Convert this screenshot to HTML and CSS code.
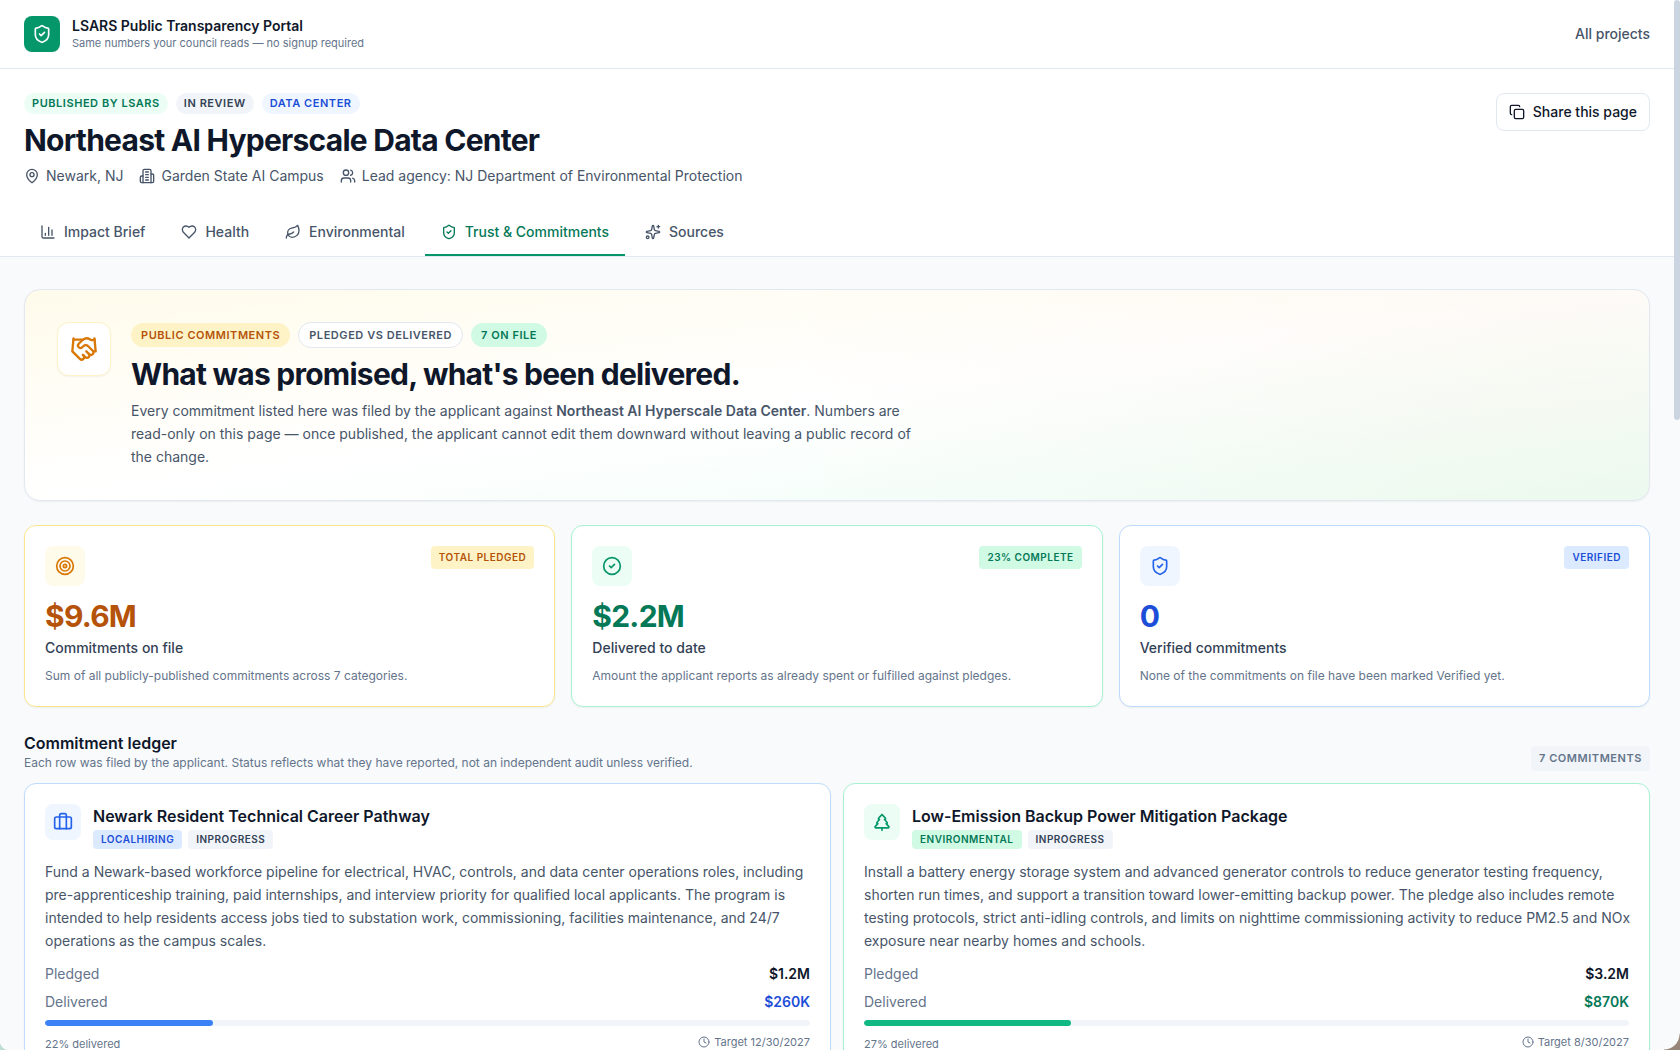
FILE: index.html
```html
<!DOCTYPE html>
<html lang="en">
<head>
  <meta charset="UTF-8" />
  <title>Northeast AI Hyperscale Data Center – LSARS Public Transparency Portal</title>
  <meta name="viewport" content="width=device-width, initial-scale=1.0" />
  <link rel="stylesheet" href="styles.css">
</head>
<body>

  <!-- Shared icons -->
  <svg class="sprite" aria-hidden="true">
    <symbol id="shield" viewBox="0 0 24 24">
      <path d="M20 13c0 5-3.5 7.5-7.66 8.95a1 1 0 0 1-.67-.01C7.5 20.5 4 18 4 13V6a1 1 0 0 1 1-1c2 0 4.5-1.2 6.24-2.72a1.17 1.17 0 0 1 1.52 0C14.51 3.81 17 5 19 5a1 1 0 0 1 1 1z" />
      <path d="m9 12 2 2 4-4" />
    </symbol>
    <symbol id="clock" viewBox="0 0 24 24">
      <circle cx="12" cy="12" r="10" />
      <path d="M12 6v6l4 2" />
    </symbol>
  </svg>

  <header class="topbar">
    <div class="brand">
      <div class="brand-logo"><svg class="icon icon-md"><use href="#shield" /></svg></div>
      <div>
        <div class="brand-name">LSARS Public Transparency Portal</div>
        <div class="brand-tagline">Same numbers your council reads — no signup required</div>
      </div>
    </div>
    <a class="topbar-link" href="#">All projects</a>
  </header>

  <section class="project">
    <div class="project-head">
      <div>
        <div class="pills">
          <span class="pill green">Published by LSARS</span>
          <span class="pill gray">In review</span>
          <span class="pill blue">Data center</span>
        </div>
        <h1>Northeast AI Hyperscale Data Center</h1>
        <div class="meta">
          <span class="meta-item">
            <svg class="icon" viewBox="0 0 24 24"><path d="M20 10c0 4.993-5.539 10.193-7.399 11.799a1 1 0 0 1-1.202 0C9.539 20.193 4 14.993 4 10a8 8 0 0 1 16 0" /><circle cx="12" cy="10" r="3" /></svg>
            Newark, NJ
          </span>
          <span class="meta-item">
            <svg class="icon" viewBox="0 0 24 24"><path d="M6 22V4a2 2 0 0 1 2-2h8a2 2 0 0 1 2 2v18Z" /><path d="M6 12H4a2 2 0 0 0-2 2v6a2 2 0 0 0 2 2h2" /><path d="M18 9h2a2 2 0 0 1 2 2v9a2 2 0 0 1-2 2h-2" /><path d="M10 6h4M10 10h4M10 14h4M10 18h4" /></svg>
            Garden State AI Campus
          </span>
          <span class="meta-item">
            <svg class="icon" viewBox="0 0 24 24"><path d="M16 21v-2a4 4 0 0 0-4-4H6a4 4 0 0 0-4 4v2" /><circle cx="9" cy="7" r="4" /><path d="M22 21v-2a4 4 0 0 0-3-3.87" /><path d="M16 3.13a4 4 0 0 1 0 7.75" /></svg>
            Lead agency: NJ Department of Environmental Protection
          </span>
        </div>
      </div>
      <button class="share" type="button">
        <svg class="icon" viewBox="0 0 24 24"><rect width="14" height="14" x="8" y="8" rx="2" /><path d="M4 16c-1.1 0-2-.9-2-2V4c0-1.1.9-2 2-2h10c1.1 0 2 .9 2 2" /></svg>
        Share this page
      </button>
    </div>

    <nav class="tabs">
      <a class="tab" href="#">
        <svg class="icon" viewBox="0 0 24 24"><path d="M3 3v16a2 2 0 0 0 2 2h16" /><path d="M18 17V9M13 17V5M8 17v-3" /></svg>
        Impact Brief
      </a>
      <a class="tab" href="#">
        <svg class="icon" viewBox="0 0 24 24"><path d="M19 14c1.49-1.46 3-3.21 3-5.5A5.5 5.5 0 0 0 16.5 3c-1.76 0-3 .5-4.5 2-1.5-1.5-2.74-2-4.5-2A5.5 5.5 0 0 0 2 8.5c0 2.3 1.5 4.05 3 5.5l7 7Z" /></svg>
        Health
      </a>
      <a class="tab" href="#">
        <svg class="icon" viewBox="0 0 24 24"><path d="M11 20A7 7 0 0 1 9.8 6.1C15.5 5 17 4.48 19 2c1 2 2 4.18 2 8 0 5.5-4.78 10-10 10Z" /><path d="M2 21c0-3 1.85-5.36 5.08-6C9.5 14.52 12 13 13 12" /></svg>
        Environmental
      </a>
      <a class="tab active" href="#" aria-current="page">
        <svg class="icon"><use href="#shield" /></svg>
        Trust &amp; Commitments
      </a>
      <a class="tab" href="#">
        <svg class="icon" viewBox="0 0 24 24"><path d="M11.017 2.814a1 1 0 0 1 1.966 0l1.051 5.558a2 2 0 0 0 1.594 1.594l5.558 1.051a1 1 0 0 1 0 1.966l-5.558 1.051a2 2 0 0 0-1.594 1.594l-1.051 5.558a1 1 0 0 1-1.966 0l-1.051-5.558a2 2 0 0 0-1.594-1.594l-5.558-1.051a1 1 0 0 1 0-1.966l5.558-1.051a2 2 0 0 0 1.594-1.594z" /><path d="M20 2v4M22 4h-4" /><circle cx="4" cy="20" r="2" /></svg>
        Sources
      </a>
    </nav>
  </section>

  <main>
    <section class="hero">
      <div class="hero-icon">
        <svg class="icon icon-lg" viewBox="0 0 24 24"><path d="m11 17 2 2a1 1 0 1 0 3-3" /><path d="m14 14 2.5 2.5a1 1 0 1 0 3-3l-3.88-3.88a3 3 0 0 0-4.24 0l-.88.88a1 1 0 1 1-3-3l2.81-2.81a5.79 5.79 0 0 1 7.06-.87l.47.28a2 2 0 0 0 1.42.25L21 4" /><path d="m21 3 1 11h-2" /><path d="M3 3 2 14l6.5 6.5a1 1 0 1 0 3-3" /><path d="M3 4h8" /></svg>
      </div>
      <div class="hero-body">
        <div class="pills">
          <span class="pill large amber">Public commitments</span>
          <span class="pill large outline">Pledged vs delivered</span>
          <span class="pill large mint">7 on file</span>
        </div>
        <h2>What was promised, what's been delivered.</h2>
        <p>Every commitment listed here was filed by the applicant against <strong>Northeast AI Hyperscale Data Center</strong>. Numbers are read-only on this page — once published, the applicant cannot edit them downward without leaving a public record of the change.</p>
      </div>
    </section>

    <section class="stats">
      <article class="card stat stat-amber">
        <div class="stat-top">
          <div class="tile"><svg class="icon icon-md" viewBox="0 0 24 24"><circle cx="12" cy="12" r="10" /><circle cx="12" cy="12" r="6" /><circle cx="12" cy="12" r="2" /></svg></div>
          <span class="tag tag-tall">Total pledged</span>
        </div>
        <div class="stat-value">$9.6M</div>
        <div class="stat-label">Commitments on file</div>
        <p class="stat-note">Sum of all publicly-published commitments across 7 categories.</p>
      </article>
      <article class="card stat stat-green">
        <div class="stat-top">
          <div class="tile"><svg class="icon icon-md" viewBox="0 0 24 24"><circle cx="12" cy="12" r="10" /><path d="m9 12 2 2 4-4" /></svg></div>
          <span class="tag tag-tall">23% complete</span>
        </div>
        <div class="stat-value">$2.2M</div>
        <div class="stat-label">Delivered to date</div>
        <p class="stat-note">Amount the applicant reports as already spent or fulfilled against pledges.</p>
      </article>
      <article class="card stat stat-blue">
        <div class="stat-top">
          <div class="tile"><svg class="icon icon-md"><use href="#shield" /></svg></div>
          <span class="tag tag-tall">Verified</span>
        </div>
        <div class="stat-value">0</div>
        <div class="stat-label">Verified commitments</div>
        <p class="stat-note">None of the commitments on file have been marked Verified yet.</p>
      </article>
    </section>

    <section>
      <div class="ledger-head">
        <div>
          <h2>Commitment ledger</h2>
          <p>Each row was filed by the applicant. Status reflects what they have reported, not an independent audit unless verified.</p>
        </div>
        <span class="count">7 commitments</span>
      </div>

      <div class="ledger">
        <article class="card pledge stat-blue">
          <div class="pledge-top">
            <div class="tile"><svg class="icon icon-md" viewBox="0 0 24 24"><path d="M16 20V4a2 2 0 0 0-2-2h-4a2 2 0 0 0-2 2v16" /><rect width="20" height="14" x="2" y="6" rx="2" /></svg></div>
            <div>
              <h3>Newark Resident Technical Career Pathway</h3>
              <div class="tags">
                <span class="tag">LocalHiring</span>
                <span class="tag tag-gray">InProgress</span>
              </div>
            </div>
          </div>
          <p class="pledge-text">Fund a Newark-based workforce pipeline for electrical, HVAC, controls, and data center operations roles, including pre-apprenticeship training, paid internships, and interview priority for qualified local applicants. The program is intended to help residents access jobs tied to substation work, commissioning, facilities maintenance, and 24/7 operations as the campus scales.</p>
          <dl class="amounts">
            <div><dt>Pledged</dt><dd>$1.2M</dd></div>
            <div><dt>Delivered</dt><dd class="delivered">$260K</dd></div>
          </dl>
          <div class="bar"><div class="bar-fill" style="width: 22%"></div></div>
          <div class="pledge-foot">
            <span>22% delivered</span>
            <span class="target"><svg class="icon icon-sm"><use href="#clock" /></svg>Target 12/30/2027</span>
          </div>
        </article>

        <article class="card pledge stat-green">
          <div class="pledge-top">
            <div class="tile"><svg class="icon icon-md" viewBox="0 0 24 24"><path d="m17 14 3 3.3a1 1 0 0 1-.7 1.7H4.7a1 1 0 0 1-.7-1.7L7 14h-.3a1 1 0 0 1-.7-1.7L9 9h-.2A1 1 0 0 1 8 7.3L12 3l4 4.3a1 1 0 0 1-.8 1.7H15l3 3.3a1 1 0 0 1-.7 1.7H17Z" /><path d="M12 22v-3" /></svg></div>
            <div>
              <h3>Low-Emission Backup Power Mitigation Package</h3>
              <div class="tags">
                <span class="tag">Environmental</span>
                <span class="tag tag-gray">InProgress</span>
              </div>
            </div>
          </div>
          <p class="pledge-text">Install a battery energy storage system and advanced generator controls to reduce generator testing frequency, shorten run times, and support a transition toward lower-emitting backup power. The pledge also includes remote testing protocols, strict anti-idling controls, and limits on nighttime commissioning activity to reduce PM2.5 and NOx exposure near nearby homes and schools.</p>
          <dl class="amounts">
            <div><dt>Pledged</dt><dd>$3.2M</dd></div>
            <div><dt>Delivered</dt><dd class="delivered">$870K</dd></div>
          </dl>
          <div class="bar"><div class="bar-fill" style="width: 27%"></div></div>
          <div class="pledge-foot">
            <span>27% delivered</span>
            <span class="target"><svg class="icon icon-sm"><use href="#clock" /></svg>Target 8/30/2027</span>
          </div>
        </article>
      </div>
    </section>
  </main>

  <!-- Scroll thumb and rounded window corners -->
  <div class="scroll-thumb"></div>
  <div class="corner corner-left"></div>
  <div class="corner corner-right"></div>

</body>
</html>
```
FILE: styles.css
```css
* {
  box-sizing: border-box;
}

html {
  scrollbar-width: none;
}

body {
  margin: 0;
  font-family: Inter, "Liberation Sans", sans-serif;
  font-size: 14px;
  line-height: 20px;
  color: #0f172a;
  background: #f8fafc;
}

h1, h2, h3, p, dl, dd {
  margin: 0;
}

a {
  text-decoration: none;
}

.sprite {
  display: none;
}

.icon {
  width: 16px;
  height: 16px;
  flex-shrink: 0;
  fill: none;
  stroke: currentColor;
  stroke-width: 2;
  stroke-linecap: round;
  stroke-linejoin: round;
}

.icon-sm {
  width: 12px;
  height: 12px;
}

.icon-md {
  width: 20px;
  height: 20px;
}

.icon-lg {
  width: 28px;
  height: 28px;
}

/* Top bar */
.topbar {
  display: flex;
  align-items: center;
  justify-content: space-between;
  padding: 16px 30px 16px 24px;
  background: #fff;
  border-bottom: 1px solid #e2e8f0;
}

.brand {
  display: flex;
  align-items: center;
  gap: 12px;
}

.brand-logo {
  display: flex;
  align-items: center;
  justify-content: center;
  width: 36px;
  height: 36px;
  border-radius: 8px;
  color: #fff;
  background: #059669;
}

.brand-name {
  font-weight: 600;
  line-height: 18px;
}

.brand-tagline {
  font-size: 11px;
  line-height: 16px;
  color: #64748b;
}

.topbar-link {
  font-weight: 500;
  color: #475569;
}

/* Project header */
.project {
  padding: 24px 30px 0 24px;
  background: #fff;
  border-bottom: 1px solid #e2e8f0;
}

.project-head {
  display: flex;
  align-items: flex-start;
  justify-content: space-between;
}

.pills {
  display: flex;
  align-items: center;
  gap: 8px;
}

.pill {
  padding: 2px 8px;
  border-radius: 999px;
  font-size: 11px;
  line-height: 17px;
  font-weight: 600;
  letter-spacing: 0.05em;
  text-transform: uppercase;
}

.pill.large {
  padding: 4px 10px;
  line-height: 16px;
}

.green {
  color: #047857;
  background: #ecfdf5;
}

.gray {
  color: #334155;
  background: #f1f5f9;
}

.blue {
  color: #1d4ed8;
  background: #eff6ff;
}

.amber {
  color: #b45309;
  background: #fef3c7;
}

.mint {
  color: #047857;
  background: #d1fae5;
}

.outline {
  color: #475569;
  background: #fff;
  border: 1px solid #e2e8f0;
}

h1,
.hero h2 {
  margin: 8px 0;
  font-size: 30px;
  line-height: 36px;
  font-weight: 700;
  letter-spacing: -0.025em;
}

.meta {
  display: flex;
  gap: 16px;
  color: #475569;
}

.meta-item {
  display: flex;
  align-items: center;
  gap: 6px;
}

.share {
  display: flex;
  align-items: center;
  gap: 8px;
  padding: 8px 12px;
  border: 1px solid #e2e8f0;
  border-radius: 8px;
  font: inherit;
  font-weight: 500;
  color: #0f172a;
  background: #fff;
  cursor: pointer;
}

.tabs {
  display: flex;
  gap: 4px;
  margin-top: 24px;
}

.tab {
  display: flex;
  align-items: center;
  gap: 8px;
  padding: 12px 16px;
  border-bottom: 2px solid transparent;
  font-weight: 500;
  color: #475569;
}

.tab.active {
  color: #047857;
  border-bottom-color: #059669;
}

/* Content */
main {
  display: flex;
  flex-direction: column;
  gap: 24px;
  padding: 32px 30px 32px 24px;
}

.hero {
  display: flex;
  align-items: flex-start;
  gap: 20px;
  padding: 32px;
  border: 1px solid #e2e8f0;
  border-radius: 16px;
  background:
    radial-gradient(circle at 95% 30%, rgba(217, 119, 6, 0.035), transparent 800px),
    linear-gradient(to bottom right, #fffbeb, #fff, #ecfdf5);
  box-shadow: 0 1px 2px rgba(0, 0, 0, 0.05);
}

.hero-icon {
  display: flex;
  align-items: center;
  justify-content: center;
  flex-shrink: 0;
  width: 54px;
  height: 54px;
  border: 1px solid #fef3c7;
  border-radius: 12px;
  color: #d97706;
  background: #fff;
  box-shadow: 0 1px 2px rgba(0, 0, 0, 0.05);
}

.hero-body {
  max-width: 800px;
}

.hero h2 {
  margin-bottom: 7px;
}

.hero p,
.pledge-text {
  line-height: 23px;
  color: #475569;
}

.hero strong {
  font-weight: 600;
}

.card {
  padding: 20px;
  border: 1px solid var(--border);
  border-radius: 12px;
  background: #fff;
  box-shadow: 0 1px 2px rgba(0, 0, 0, 0.05);
}

.stat-amber {
  --border: #fde68a;
  --tile: #fffbeb;
  --icon: #d97706;
  --tag: #fef3c7;
  --text: #b45309;
}

.stat-green {
  --border: #a7f3d0;
  --tile: #ecfdf5;
  --icon: #059669;
  --tag: #d1fae5;
  --text: #047857;
  --bar: #10b981;
}

.stat-blue {
  --border: #bfdbfe;
  --tile: #eff6ff;
  --icon: #2563eb;
  --tag: #dbeafe;
  --text: #1d4ed8;
  --bar: #3b82f6;
}

.tile {
  display: flex;
  align-items: center;
  justify-content: center;
  flex-shrink: 0;
  width: 40px;
  height: 40px;
  border-radius: 8px;
  color: var(--icon);
  background: var(--tile);
}

.tag {
  padding: 2px 8px;
  border-radius: 4px;
  font-size: 10px;
  line-height: 15px;
  font-weight: 600;
  letter-spacing: 0.05em;
  text-transform: uppercase;
  color: var(--text);
  background: var(--tag);
}

.tag-tall {
  padding: 4px 8px;
}

.tag-gray {
  color: #334155;
  background: #f1f5f9;
}

.stats {
  display: grid;
  grid-template-columns: repeat(3, 1fr);
  gap: 16px;
}

.stat-top {
  display: flex;
  align-items: flex-start;
  justify-content: space-between;
}

.stat-value {
  margin-top: 12px;
  font-size: 30px;
  line-height: 36px;
  font-weight: 700;
  letter-spacing: -0.025em;
  color: var(--text);
}

.stat-label {
  margin-top: 4px;
  font-weight: 500;
  color: #334155;
}

.stat-note {
  margin-top: 8px;
  font-size: 12px;
  color: #64748b;
}

/* Ledger */
.ledger-head {
  display: flex;
  align-items: flex-end;
  justify-content: space-between;
  margin-bottom: 12px;
}

.ledger-head h2,
.pledge h3 {
  font-size: 16px;
  line-height: 24px;
  font-weight: 600;
}

.ledger-head p {
  font-size: 12px;
  line-height: 16px;
  color: #64748b;
}

.count {
  padding: 4px 8px;
  border-radius: 4px;
  font-size: 11px;
  line-height: 17px;
  font-weight: 600;
  letter-spacing: 0.05em;
  text-transform: uppercase;
  color: #64748b;
  background: #f1f5f9;
}

.ledger {
  display: grid;
  grid-template-columns: repeat(2, 1fr);
  gap: 12px;
}

.pledge-top {
  display: flex;
  align-items: flex-start;
  gap: 12px;
}

.pledge .tile {
  width: 36px;
  height: 36px;
}

.tags {
  display: flex;
  gap: 6px;
  margin-top: 2px;
}

.pledge-text {
  margin: 11px -8px 0 0;
}

.amounts {
  display: grid;
  gap: 8px;
  margin-top: 12px;
}

.amounts div {
  display: flex;
  justify-content: space-between;
}

.amounts dt {
  color: #64748b;
}

.amounts dd {
  font-weight: 600;
}

.amounts .delivered {
  color: var(--text);
}

.bar {
  height: 6px;
  margin-top: 8px;
  border-radius: 999px;
  background: #f1f5f9;
  overflow: hidden;
}

.bar-fill {
  height: 100%;
  border-radius: 999px;
  background: var(--bar);
}

.pledge-foot {
  display: flex;
  align-items: flex-start;
  justify-content: space-between;
  margin-top: 8px;
  font-size: 11px;
  line-height: 16px;
  color: #64748b;
}

.pledge-foot > :first-child {
  padding-top: 2px;
}

.target {
  display: flex;
  align-items: center;
  gap: 4px;
}

/* Window frame */
.scroll-thumb {
  position: fixed;
  top: 0;
  right: 0;
  width: 6px;
  height: 40vh;
  border-radius: 3px;
  background: #cbd5e1;
}

.corner {
  position: fixed;
  bottom: 0;
  width: 16px;
  height: 16px;
}

.corner-left {
  left: 0;
  width: 10px;
  height: 10px;
  background: radial-gradient(circle at 100% 0, transparent 10px, #bfdcd0 11px);
}

.corner-right {
  right: 0;
  background: radial-gradient(circle at 0 0, transparent 15px, #97857a 16px);
}
```
